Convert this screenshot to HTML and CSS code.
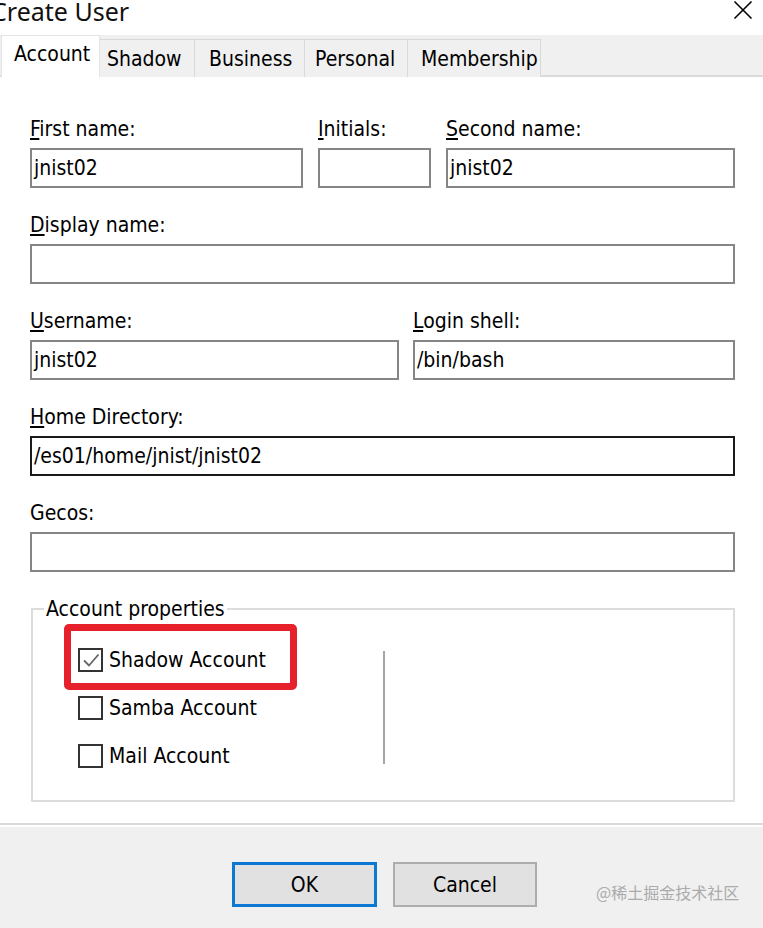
FILE: index.html
```html
<!DOCTYPE html>
<html>
<head>
<meta charset="utf-8">
<title>Create User</title>
<link rel="stylesheet" href="styles.css">
</head>
<body>
<div class="window">
  <header class="titlebar">
    <span class="title">Create User</span>
    <svg class="close" width="20" height="20" viewBox="0 0 20 20"><path d="M1.5 1.5 L18.5 18.5 M18.5 1.5 L1.5 18.5" stroke="#000" stroke-width="1.6" fill="none"/></svg>
  </header>
  <nav class="tabs">
    <div class="tab active">Account</div>
    <div class="tab tab-shadow">Shadow</div>
    <div class="tab tab-business">Business</div>
    <div class="tab tab-personal">Personal</div>
    <div class="tab tab-membership">Membership</div>
  </nav>
  <main class="panel">
    <div class="row cols-3">
      <div class="field"><div class="lbl"><u>F</u>irst name:</div><div class="input">jnist02</div></div>
      <div class="field"><div class="lbl"><u>I</u>nitials:</div><div class="input"></div></div>
      <div class="field"><div class="lbl"><u>S</u>econd name:</div><div class="input">jnist02</div></div>
    </div>
    <div class="row">
      <div class="field"><div class="lbl"><u>D</u>isplay name:</div><div class="input"></div></div>
    </div>
    <div class="row cols-2">
      <div class="field"><div class="lbl"><u>U</u>sername:</div><div class="input">jnist02</div></div>
      <div class="field"><div class="lbl"><u>L</u>ogin shell:</div><div class="input">/bin/bash</div></div>
    </div>
    <div class="row">
      <div class="field"><div class="lbl"><u>H</u>ome Directory:</div><div class="input focused">/es01/home/jnist/jnist02</div></div>
    </div>
    <div class="row">
      <div class="field"><div class="lbl">Gecos:</div><div class="input"></div></div>
    </div>
    <fieldset class="group">
      <legend class="legend">Account properties</legend>
      <div class="props">
        <div class="checks">
          <div class="check-row">
            <span class="box"><svg width="20" height="20" viewBox="0 0 20 20"><path d="M3 10.5 L8 15.5 L17.5 4.5" stroke="#666" stroke-width="1.8" fill="none"/></svg></span>
            <span class="check-label">Shadow Account</span>
            <span class="mark"></span>
          </div>
          <div class="check-row">
            <span class="box"></span>
            <span class="check-label">Samba Account</span>
          </div>
          <div class="check-row">
            <span class="box"></span>
            <span class="check-label">Mail Account</span>
          </div>
        </div>
        <div class="divider"></div>
      </div>
    </fieldset>
  </main>
  <footer class="footer">
    <button class="btn default">OK</button>
    <button class="btn">Cancel</button>
    <span class="watermark">@稀土掘金技术社区</span>
  </footer>
</div>
</body>
</html>
```
FILE: styles.css
```css
* { box-sizing: border-box; }
html, body { margin: 0; padding: 0; }
body {
  width: 763px;
  height: 928px;
  overflow: hidden;
  background: #fff;
  font-family: "DejaVu Sans Condensed", "DejaVu Sans", sans-serif;
  font-stretch: condensed;
  font-size: 21px;
  color: #000;
}
.window { width: 763px; height: 928px; display: flex; flex-direction: column; }

.titlebar {
  height: 35px;
  display: flex;
  justify-content: space-between;
  align-items: flex-start;
  padding-right: 10px;
}
.title {
  font-family: "Noto Sans", sans-serif;
  font-stretch: normal;
  font-size: 25px;
  line-height: 22px;
  margin-left: -9px;
  color: #111;
}
.close { margin-top: 0px; }

.tabs {
  height: 42px;
  background: #f0f0f0;
  border-bottom: 2px solid #dadada;
  display: flex;
  align-items: flex-end;
  padding-left: 1px;
}
.tab {
  height: 38px;
  border: 1.5px solid #d9d9d9;
  border-bottom: none;
  border-left: none;
  background: #f0f0f0;
  line-height: 38px;
  white-space: nowrap;
  margin-bottom: -2px;
  overflow: hidden;
}
.tab-shadow { width: 95px; padding-left: 7px; }
.tab-business { width: 110px; padding-left: 14px; }
.tab-personal { width: 103px; padding-left: 10px; }
.tab-membership { width: 133px; padding-left: 13px; }
.tab.active {
  background: #fff;
  height: 42px;
  line-height: 36px;
  padding: 0 0 0 12px;
  border: 1px solid #e4e4e4;
  border-bottom: none;
  width: 99px;
}

.panel {
  height: 748px;
  background: #fff;
  padding: 40px 28px 0 30px;
  border-bottom: 2px solid #dadada;
  display: flex;
  flex-direction: column;
}
.row { display: grid; grid-template-columns: 1fr; margin-bottom: 25px; }
.row.cols-3 { grid-template-columns: 273px 113px 289px; column-gap: 15px; }
.row.cols-2 { grid-template-columns: 369px 322px; column-gap: 14px; }
.lbl { line-height: 24px; height: 24px; margin-bottom: 7px; white-space: nowrap; }
.input {
  height: 40px;
  border: 2px solid #858585;
  background: #fff;
  padding: 0 2px;
  line-height: 36px;
  white-space: nowrap;
}
.input.focused { border-color: #1a1a1a; }

.group {
  margin: 0 0 0 1px;
  width: 704px;
  border: 2px solid #dcdcdc;
  padding: 27px 0 32px 0;
}
.legend {
  padding: 0 2px;
  margin-left: 11px;
  line-height: 24px;
  color: #000;
}
.props { display: flex; align-items: flex-start; padding-left: 45px; }
.checks { width: 305px; display: flex; flex-direction: column; gap: 24px; }
.check-row { display: flex; align-items: center; height: 24px; position: relative; }
.box {
  width: 25px;
  height: 24px;
  border: 2px solid #333;
  background: #fff;
  display: flex;
  align-items: center;
  justify-content: center;
  margin-right: 6px;
  flex: none;
}
.check-label { line-height: 24px; white-space: nowrap; }
.mark {
  position: absolute;
  left: -14px;
  top: -24px;
  width: 233px;
  height: 66px;
  border: 7px solid #e6212b;
  border-radius: 5px;
}
.divider { width: 2px; height: 113px; margin-top: 3px; background: #a5a5a5; }

.footer {
  flex: 1;
  background: #f0f0f0;
  border-top: 2px solid #fff;
  position: relative;
  display: flex;
  align-items: flex-start;
  padding: 35px 0 0 232px;
  gap: 16px;
}
.btn {
  font-family: "DejaVu Sans Condensed", "DejaVu Sans", sans-serif;
  font-stretch: condensed;
  font-size: 21px;
  color: #000;
  background: #e1e1e1;
  border: 2px solid #adadad;
  width: 144px;
  height: 45px;
  padding: 0;
}
.btn.default { border: 3px solid #0b78d4; width: 145px; }
.watermark {
  position: absolute;
  left: 596px;
  top: 55px;
  font-family: "Noto Sans CJK SC", sans-serif;
  font-size: 16px;
  line-height: 20px;
  color: #ababab;
}
```
